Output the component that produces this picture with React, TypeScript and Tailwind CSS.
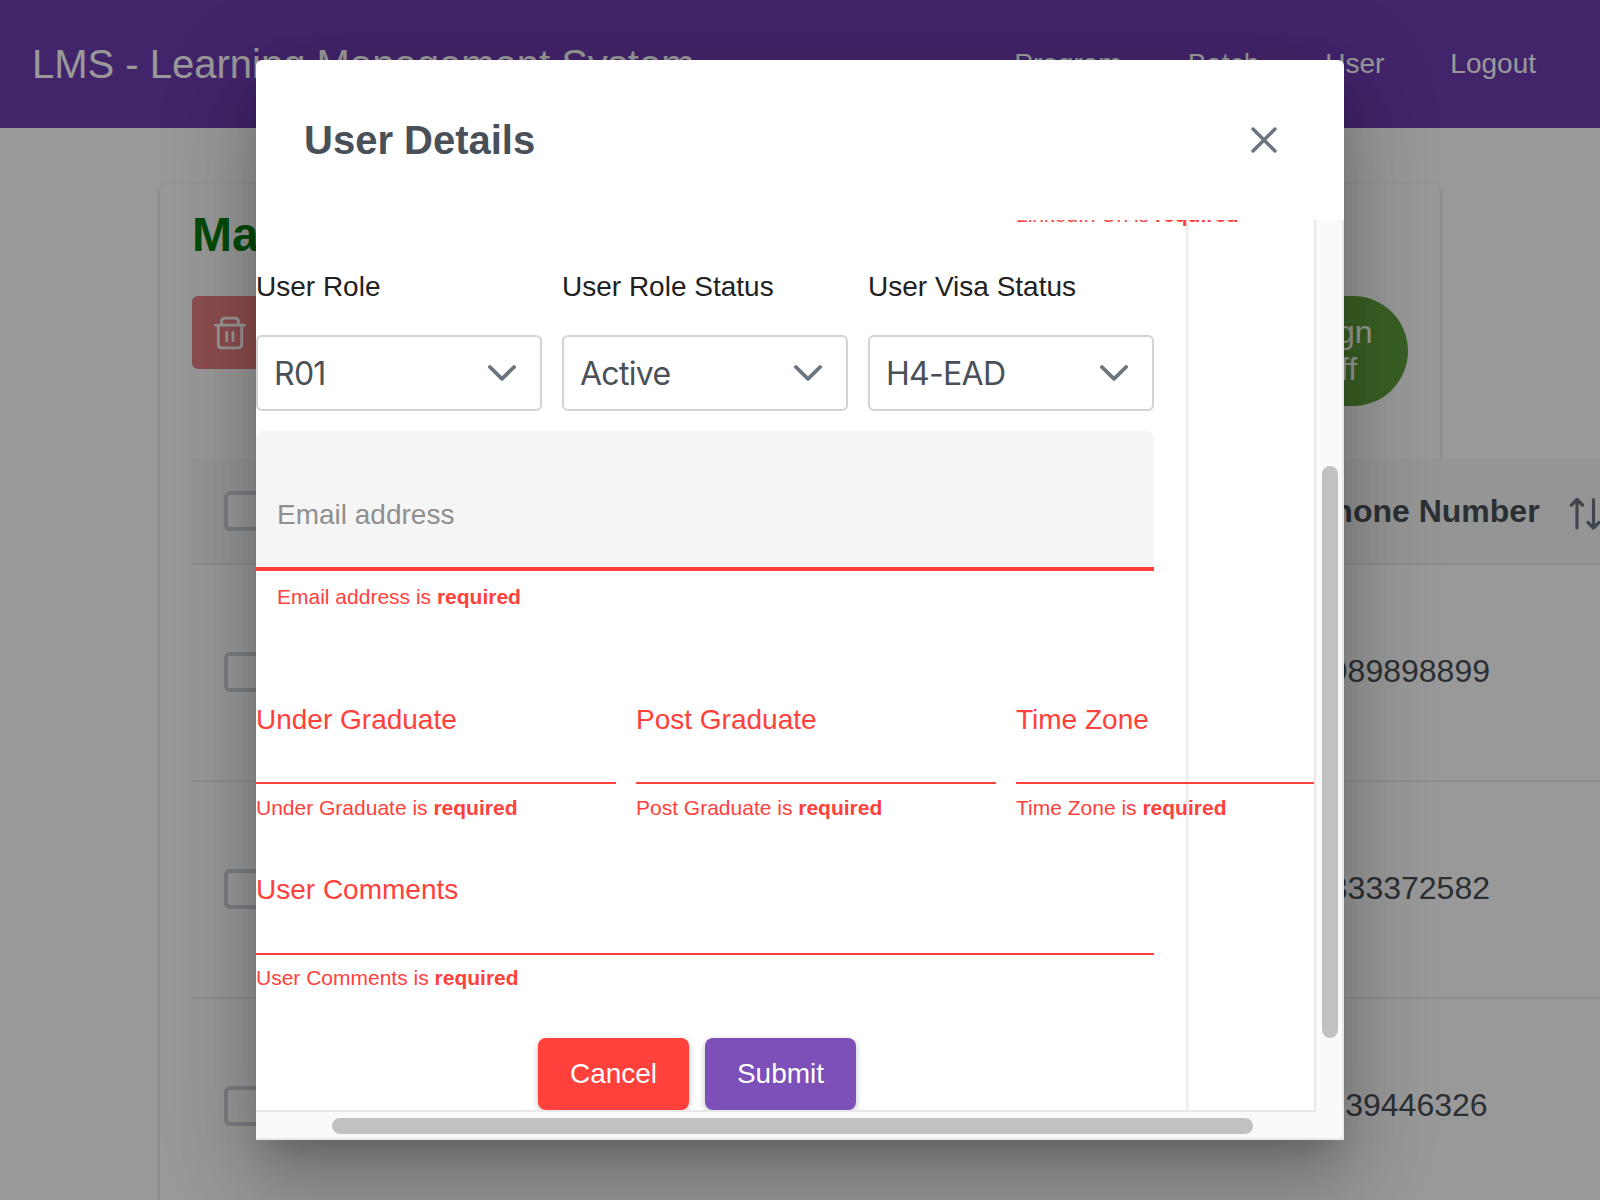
import React from 'react';

const NAV = ['Program', 'Batch', 'User', 'Logout'];
const PHONES = ['9989898899', '3333372582', '1139446326'];
const SELECTS = [
  { label: 'User Role', value: 'R01' },
  { label: 'User Role Status', value: 'Active' },
  { label: 'User Visa Status', value: 'H4-EAD' },
];

function TrashIcon() {
  return (
    <svg width="32" height="34" viewBox="0 0 32 34" fill="none" stroke="white" strokeWidth="2.8" strokeLinecap="round" strokeLinejoin="round">
      <path d="M1.500 9.200h29M4.300 9.200v19.600a3 3 0 0 0 3 3h17.400a3 3 0 0 0 3-3V9.200M7.600 9.200V5.100a3 3 0 0 1 3-3h10.800a3 3 0 0 1 3 3v4.100M12.700 16.200v8.600M19 16.200v8.600" />
    </svg>
  );
}

function SortIcon() {
  return (
    <svg className="shrink-0" width="32" height="34" viewBox="0 0 32 34" fill="none" stroke="#6c757d" strokeWidth="3.200" strokeLinecap="round" strokeLinejoin="round">
      <path d="M8 31V2.500M2.500 8L8 2.500L13.500 8M24.500 2.500V31M19 25.500L24.500 31l5.500-5.500" />
    </svg>
  );
}

function Chevron() {
  return (
    <svg width="28" height="28" viewBox="0 0 28 28" fill="none" stroke="#6c757d" strokeWidth="3.800" strokeLinecap="round" strokeLinejoin="round">
      <path d="M1.900 8L14 19.800L26.100 8" />
    </svg>
  );
}

function ErrorText({ name, className = '' }: { name: string; className?: string }) {
  return (
    <div className={`whitespace-nowrap text-[21px] leading-[24px] text-[#ff403b] ${className}`}>
      {name} is <strong className="font-bold">required</strong>
    </div>
  );
}

function LineField({ name, labelGap, errorGap }: { name: string; labelGap: string; errorGap: string }) {
  return (
    <div>
      <div className={`border-b-2 border-[#ff403b] text-[28px] leading-[32px] text-[#ff403b] ${labelGap}`}>{name}</div>
      <ErrorText name={name} className={errorGap} />
    </div>
  );
}

function Checkbox() {
  return <div className="ml-8 h-10 w-10 shrink-0 rounded-[6px] border-4 border-[#ced4da] bg-white" />;
}

function Page() {
  return (
    <div className="h-[1200px] overflow-hidden bg-white">
      <header className="flex h-32 items-center justify-between bg-[#6e3cb2] pl-8 pr-16 text-white">
        <h1 className="pb-px text-[40px] leading-[48px]">LMS - Learning Management System</h1>
        <nav className="flex gap-[66px] pb-px text-[28px]">
          {NAV.map((n) => (
            <span key={n}>{n}</span>
          ))}
        </nav>
      </header>
      <main className="mx-40 mt-14 h-[1100px] rounded-lg bg-white px-8 shadow-[0_4px_2px_-2px_rgba(0,0,0,0.2),0_2px_2px_0_rgba(0,0,0,0.14),0_2px_6px_0_rgba(0,0,0,0.12)]">
        <h2 className="pb-px pt-[23px] text-[48px] font-bold leading-[56px] text-[#007d10]">Manage User</h2>
        <div className="mt-8 flex items-start justify-between">
          <button className="flex h-[73px] w-[96px] items-center rounded-[6px] bg-[#eb8082] pl-[22px]">
            <TrashIcon />
          </button>
          <button className="h-[110px] w-[164px] rounded-full bg-[#5fa03c] pr-[3px] text-center text-[32px] leading-[37px] text-white">
            Assign
            <br />
            Staff
          </button>
        </div>
        <div className="mt-[53px] w-[1500px] text-[32px] text-[#495057]">
          <div className="flex h-[106px] items-center border-b-2 border-[#e9ecef] bg-[#f8f9fa] pb-px font-bold">
            <Checkbox />
            <span className="ml-[1048px] whitespace-nowrap">Phone Number</span>
            <span className="ml-[29px] mt-[6px]">
              <SortIcon />
            </span>
          </div>
          {PHONES.map((p) => (
            <div key={p} className="flex h-[217px] items-center border-b-2 border-[#e9ecef] bg-white pb-[2px]">
              <Checkbox />
              <span className="ml-[1048px] pb-px">{p}</span>
            </div>
          ))}
        </div>
      </main>
    </div>
  );
}

function Dialog() {
  return (
    <div className="h-[1080px] w-[1088px] overflow-hidden rounded-t-[6px] bg-white">
      <div className="flex h-40 items-center justify-between pl-12 pr-[66px]">
        <h2 className="text-[40px] font-bold leading-[48px] text-[#495057]">User Details</h2>
        <svg width="28" height="28" viewBox="0 0 28 28" fill="none" stroke="#6c757d" strokeWidth="3.400" strokeLinecap="round">
          <path d="M3 3l22 22M25 3L3 25" />
        </svg>
      </div>
      <div className="grid h-[920px] grid-cols-[1058px_30px] grid-rows-[890px_30px]">
        <div className="overflow-hidden">
          <div className="h-[890px] w-[930px] shadow-[0_0_4px_1px_rgba(0,0,0,0.14)]">
            <form className="flex w-[898px] flex-col">
              <div className="-mt-[17px] grid grid-cols-[360px_360px_360px] gap-5">
                <ErrorText name="LinkedIn Url" className="col-start-3" />
              </div>
              <div className="mt-[44px] grid grid-cols-3 gap-5">
                {SELECTS.map((s) => (
                  <div key={s.label}>
                    <div className="text-[28px] leading-[32px] text-[#212121]">{s.label}</div>
                    <div className="mt-[32px] flex h-[76px] items-center justify-between rounded-[6px] border-2 border-[#ced4da] pl-4 pr-6 font-['Inter'] text-[32px] tracking-[-0.022em] text-[#495057]">
                      <span className="pt-[2px]">{s.value}</span>
                      <Chevron />
                    </div>
                  </div>
                ))}
              </div>
              <div className="mt-5 h-[140px] rounded-t-lg border-b-4 border-[#ff403b] bg-[#f5f5f5] pl-[21px] pt-[68px] text-[28px] leading-[32px] text-[#8f8f8f]">
                Email address
              </div>
              <ErrorText name="Email address" className="mt-[14px] pl-[21px]" />
              <div className="mt-[95px] grid grid-cols-[360px_360px_360px] gap-5">
                <LineField name="Under Graduate" labelGap="pb-[46px]" errorGap="mt-[12px]" />
                <LineField name="Post Graduate" labelGap="pb-[46px]" errorGap="mt-[12px]" />
                <LineField name="Time Zone" labelGap="pb-[46px]" errorGap="mt-[12px]" />
              </div>
              <div className="mt-[54px]">
                <LineField name="User Comments" labelGap="pb-[47px]" errorGap="mt-[11px]" />
              </div>
              <div className="ml-[282px] mt-12 flex gap-4 text-[28px] text-white">
                <button type="button" className="h-[72px] w-[151px] rounded-lg bg-[#ff403b] shadow-[0_2px_6px_rgba(0,0,0,0.26)]">
                  Cancel
                </button>
                <button type="button" className="h-[72px] w-[151px] rounded-lg bg-[#7d4fb8] shadow-[0_2px_6px_rgba(0,0,0,0.26)]">
                  Submit
                </button>
              </div>
            </form>
          </div>
        </div>
        <div className="border-x-2 border-[#e8e8e8] bg-[#fafafa] pl-[6px] pt-[246px]">
          <div className="h-[572px] w-4 rounded-full bg-[#c1c1c1]" />
        </div>
        <div className="border-y-2 border-[#e8e8e8] bg-[#fafafa] pl-[76px] pt-[6px]">
          <div className="h-4 w-[921px] rounded-full bg-[#c1c1c1]" />
        </div>
        <div className="border-b-2 border-r-2 border-[#ebebeb] bg-[#fafafa]">
          <div className="h-[2px] w-[2px] bg-[#e8e8e8]" />
        </div>
      </div>
    </div>
  );
}

export default function App() {
  return (
    <div className="relative h-[1200px] w-[1600px] overflow-hidden font-['Liberation_Sans',Arial,sans-serif]">
      <Page />
      <div className="absolute inset-0 flex items-center justify-center bg-black/40">
        <div className="rounded-t-[6px] shadow-[0_22px_30px_-14px_rgba(0,0,0,0.2),0_48px_76px_6px_rgba(0,0,0,0.14),0_18px_92px_16px_rgba(0,0,0,0.12)]">
          <Dialog />
        </div>
      </div>
    </div>
  );
}
